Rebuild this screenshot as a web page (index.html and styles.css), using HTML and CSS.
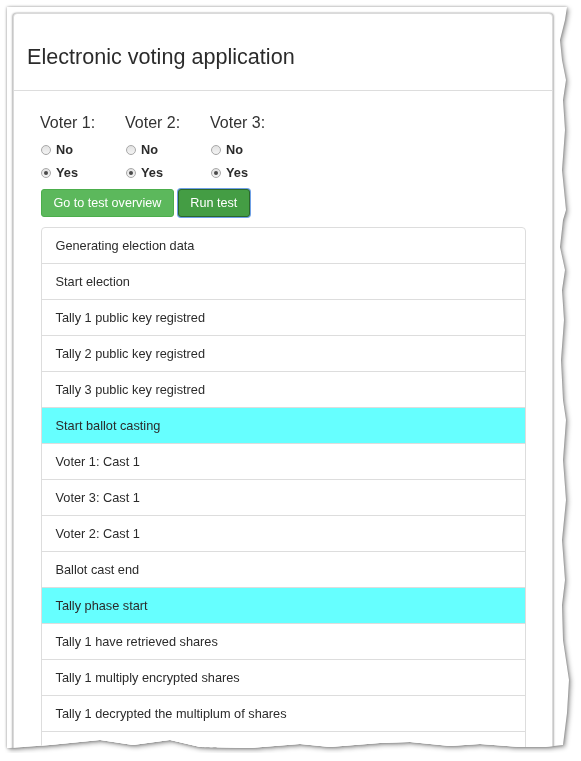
FILE: index.html
```html
<!DOCTYPE html>
<html lang="en">
<head>
<meta charset="utf-8">
<title>Electronic voting application</title>
<link rel="stylesheet" href="styles.css">
</head>
<body>
<div class="shot">
  <div class="paper">
    <div class="panel">
      <div class="panel-heading">
        <h3 class="panel-title">Electronic voting application</h3>
      </div>
      <div class="panel-body">
        <div class="voters">
          <div class="voter">
            <div class="voter-label">Voter 1:</div>
            <label class="radio"><input type="radio" name="v1"><span>No</span></label>
            <label class="radio"><input type="radio" name="v1" checked><span>Yes</span></label>
          </div>
          <div class="voter">
            <div class="voter-label">Voter 2:</div>
            <label class="radio"><input type="radio" name="v2"><span>No</span></label>
            <label class="radio"><input type="radio" name="v2" checked><span>Yes</span></label>
          </div>
          <div class="voter">
            <div class="voter-label">Voter 3:</div>
            <label class="radio"><input type="radio" name="v3"><span>No</span></label>
            <label class="radio"><input type="radio" name="v3" checked><span>Yes</span></label>
          </div>
        </div>
        <div class="actions">
          <button class="btn btn-success">Go to test overview</button>
          <button class="btn btn-success btn-focus">Run test</button>
        </div>
        <ul class="list-group">
          <li class="list-group-item">Generating election data</li>
          <li class="list-group-item">Start election</li>
          <li class="list-group-item">Tally 1 public key registred</li>
          <li class="list-group-item">Tally 2 public key registred</li>
          <li class="list-group-item">Tally 3 public key registred</li>
          <li class="list-group-item phase">Start ballot casting</li>
          <li class="list-group-item">Voter 1: Cast 1</li>
          <li class="list-group-item">Voter 3: Cast 1</li>
          <li class="list-group-item">Voter 2: Cast 1</li>
          <li class="list-group-item">Ballot cast end</li>
          <li class="list-group-item phase">Tally phase start</li>
          <li class="list-group-item">Tally 1 have retrieved shares</li>
          <li class="list-group-item">Tally 1 multiply encrypted shares</li>
          <li class="list-group-item">Tally 1 decrypted the multiplum of shares</li>
          <li class="list-group-item">Tally 2 have retrieved shares</li>
        </ul>
      </div>
    </div>
  </div>
</div>
</body>
</html>
```
FILE: styles.css
```css
html, body {
  margin: 0;
  padding: 0;
  background: #fff;
}

body {
  font-family: "Liberation Sans", Arial, Helvetica, sans-serif;
  color: #2b2b2b;
  font-size: 12.75px;
  line-height: 18px;
}

.shot {
  width: 563px;
  padding: 7px 0 0 7px;
  filter: drop-shadow(0 0 1.5px rgba(0, 0, 0, 0.35)) drop-shadow(2px 2px 2px rgba(0, 0, 0, 0.35));
}

.paper {
  width: 563px;
  height: 746px;
  box-sizing: border-box;
  padding: 6px 0 0 6px;
  background: #fff;
  overflow: hidden;
  clip-path: polygon(0 0, 560px 0, 558px 13px, 553px 33px, 555px 53px, 559px 73px, 556px 93px,
    558px 123px, 555px 163px, 559px 203px, 556px 213px, 553px 240px, 558px 263px, 555px 283px,
    557px 313px, 554px 353px, 556px 393px, 559px 413px, 556px 453px, 559px 493px, 555px 533px,
    558px 573px, 555px 598px, 556px 633px, 562px 673px, 560px 706px, 556px 738px,
    538px 740px, 513px 740px, 473px 737px, 443px 739px, 403px 735px, 373px 736px, 323px 740px,
    293px 737px, 243px 741px, 193px 740px, 163px 733px, 126px 738px, 93px 733px, 43px 738px,
    3px 741px, 0 741px);
}

.panel {
  width: 540px;
  box-sizing: border-box;
  border: 1px solid #dadada;
  border-radius: 4px;
  background: #fff;
  box-shadow: -1px 0 2px rgba(0, 0, 0, 0.28), 1px 0 2px rgba(0, 0, 0, 0.28);
}

.panel-heading {
  height: 77px;
  box-sizing: border-box;
  padding: 31px 13px 0;
  border-bottom: 1px solid #dddddd;
}

.panel-title {
  margin: 0;
  font-size: 21.6px;
  line-height: 24px;
  font-weight: normal;
  color: #2b2b2b;
}

.panel-body {
  padding: 23px 26px 0 27px;
}

.voters {
  display: grid;
  grid-template-columns: repeat(3, 85px);
}

.voter-label {
  font-size: 16px;
  line-height: 18px;
  margin-left: -1px;
  margin-bottom: 6px;
  color: #333;
}

.radio {
  display: flex;
  align-items: center;
  height: 23px;
  font-weight: bold;
  color: #2b2b2b;
}

.radio input {
  appearance: none;
  -webkit-appearance: none;
  width: 10px;
  height: 10px;
  margin: 0 5px 0 0;
  border: 1px solid #a8a8a8;
  border-radius: 50%;
  box-sizing: border-box;
  background: linear-gradient(#e2e2e2, #f4f4f4);
  display: flex;
  align-items: center;
  justify-content: center;
}

.radio input:checked::after {
  content: "";
  width: 4px;
  height: 4px;
  border-radius: 50%;
  background: #4a4a4a;
}

.actions {
  display: flex;
  gap: 4px;
  margin-top: 5px;
}

.btn {
  font-family: inherit;
  font-size: 12.6px;
  line-height: 18px;
  padding: 3.5px 11.5px 4.5px;
  border: 1px solid #4cae4c;
  border-radius: 3px;
  background: #5cb85c;
  color: #fff;
  cursor: pointer;
}

.btn-focus {
  background: #449d44;
  border-color: #2b662b;
  box-shadow: 0 0 0 1px #6fa0e6;
}

.list-group {
  list-style: none;
  margin: 10px 0 0;
  padding: 0;
}

.list-group-item {
  padding: 8.5px 13.5px;
  border: 1px solid #dddddd;
  margin-bottom: -1px;
  background: #fff;
  color: #2b2b2b;
}

.list-group-item:first-child {
  border-top-left-radius: 4px;
  border-top-right-radius: 4px;
}

.list-group-item.phase {
  background: #66ffff;
}
```
